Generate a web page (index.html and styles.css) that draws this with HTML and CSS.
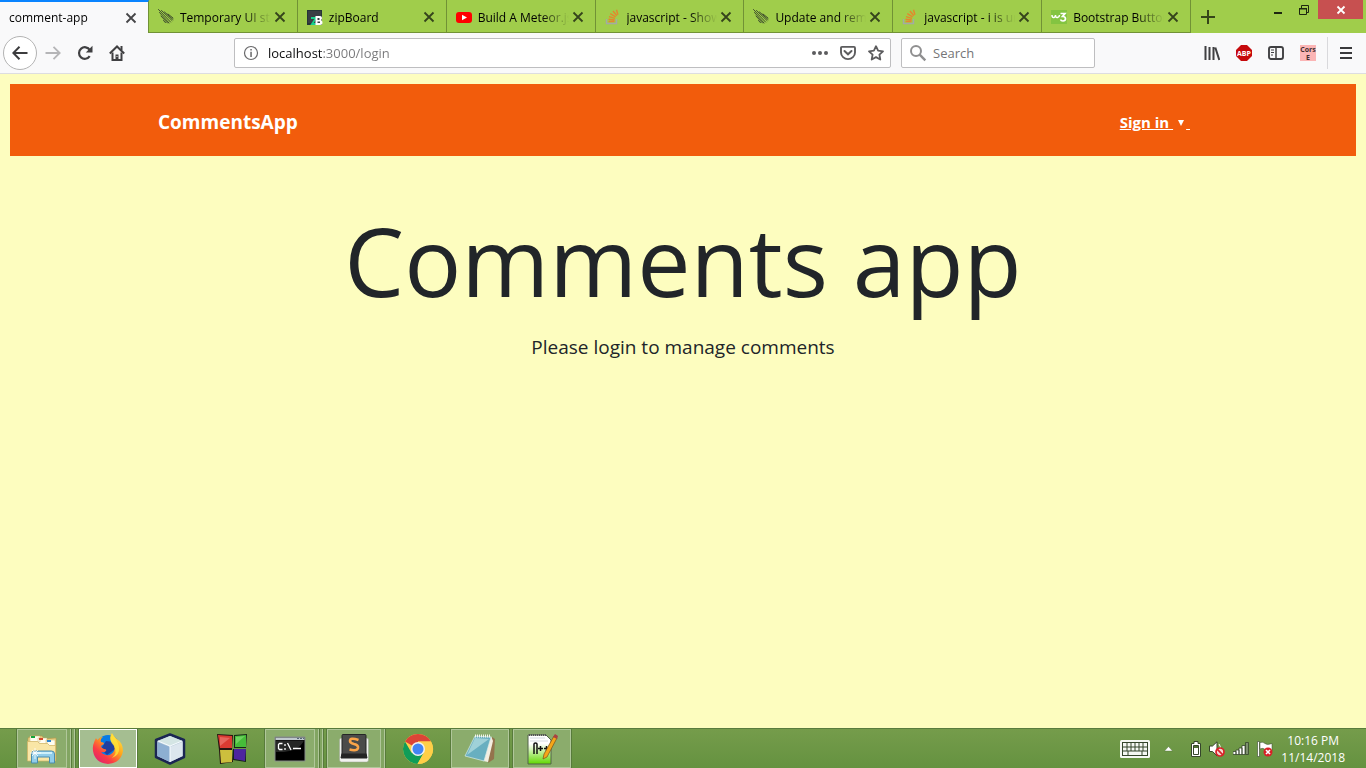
FILE: index.html
```html
<!DOCTYPE html>
<html lang="en">
<head>
<meta charset="utf-8">
<meta name="viewport" content="width=device-width, initial-scale=1">
<title>comment-app</title>
<link rel="stylesheet" href="styles.css">
</head>
<body>
<svg class="defs" aria-hidden="true">
  <symbol id="close" viewBox="0 0 12 12"><path d="M1.500 1.500l9 9M10.500 1.500l-9 9" stroke="currentColor" stroke-width="1.800" fill="none"/></symbol>
  <symbol id="meteor" viewBox="0 0 16 16"><path d="M.5.5l12 12.500M3.500 1.500l10.500 10M6.500 3l8.500 7.500M10 5l5 4M1.500 3.500l9.500 10.500M3 7l6.500 7M5.500 11.500l2 2.200" stroke="#34412a" stroke-width=".9" fill="none" stroke-linecap="round"/></symbol>
  <symbol id="stack" viewBox="0 0 16 16"><path d="M1.500 10v4.500h10V10" fill="none" stroke="#a4a9a4" stroke-width="1.400"/><path d="M3.500 12.500h6M3.500 10.300l6.200.7M4 7.600l6 1.800M5.300 4.700l5.300 3.200M8 2l3.800 4.800M11.500.8l1.400 5" stroke="#e5862c" stroke-width="1.400" fill="none"/></symbol>
</svg>

<header class="browser">
  <div class="tabstrip">
    <nav class="tabs" aria-label="Open tabs">
      <div class="tab tab-active"><span class="tab-title">comment-app</span><button class="tab-close" aria-label="Close tab"><svg><use href="#close"/></svg></button></div>
      <div class="tab"><svg class="favicon"><use href="#meteor"/></svg><span class="tab-title">Temporary UI state</span><button class="tab-close" aria-label="Close tab"><svg><use href="#close"/></svg></button></div>
      <div class="tab">
        <svg class="favicon" viewBox="0 0 16 16"><path d="M0 1h15v15H0z" fill="#263536"/><path d="M1 2h13v12H1z" fill="#3a3e44"/><path d="M4 9h5l-4 6h4" stroke="#17cf8b" stroke-width="1.800" fill="none"/><path d="M8.500 7h4.500q2 0 2 2 0 1.500-1 2 1.500.5 1.500 2.500 0 2.500-2.500 2.500H8.500zm2 2v2h2V9zm0 3.500V14h2.500v-1.500z" fill="#fff" fill-rule="evenodd"/></svg>
        <span class="tab-title">zipBoard</span><button class="tab-close" aria-label="Close tab"><svg><use href="#close"/></svg></button>
      </div>
      <div class="tab">
        <svg class="favicon" viewBox="0 0 16 16"><rect y="3" width="16" height="11" rx="3" fill="#f00"/><path d="M6 5.800v5.400L11 8.500z" fill="#fff"/></svg>
        <span class="tab-title">Build A Meteor.js App</span><button class="tab-close" aria-label="Close tab"><svg><use href="#close"/></svg></button>
      </div>
      <div class="tab"><svg class="favicon"><use href="#stack"/></svg><span class="tab-title">javascript - Show hide</span><button class="tab-close" aria-label="Close tab"><svg><use href="#close"/></svg></button></div>
      <div class="tab"><svg class="favicon"><use href="#meteor"/></svg><span class="tab-title">Update and remove</span><button class="tab-close" aria-label="Close tab"><svg><use href="#close"/></svg></button></div>
      <div class="tab"><svg class="favicon"><use href="#stack"/></svg><span class="tab-title">javascript - i is undefined</span><button class="tab-close" aria-label="Close tab"><svg><use href="#close"/></svg></button></div>
      <div class="tab">
        <svg class="favicon" viewBox="0 0 16 16"><path d="M0 1h16v14H0z" fill="#83c441"/><path d="M1 6q0 3 2 2.500Q4.500 8 4.500 6q0 3 2 2.500Q8.500 8 8.500 6" stroke="#fff" stroke-width="1.500" fill="none"/><path d="M9.500 4.500h4.500L11.500 7.500q3 0 3 2.300 0 2.200-2.500 2.200-2 0-2.500-1.500" stroke="#fff" stroke-width="1.700" fill="none"/></svg>
        <span class="tab-title">Bootstrap Buttons</span><button class="tab-close" aria-label="Close tab"><svg><use href="#close"/></svg></button>
      </div>
    </nav>
    <button class="new-tab" aria-label="New tab"><svg width="14" height="14" viewBox="0 0 14 14"><path d="M7 0v14M0 7h14" stroke="#354519" stroke-width="2"/></svg></button>
    <div class="window-controls">
      <button class="win-btn" aria-label="Minimize"><svg width="12" height="12" viewBox="0 0 12 12"><path d="M2 8h8v2H2z" fill="#1d2710"/></svg></button>
      <button class="win-btn" aria-label="Restore"><svg width="12" height="12" viewBox="0 0 12 12"><path d="M1.500 4.500h7v6h-7zM3.500 4V1.500h7v7H9" fill="none" stroke="#1d2710"/><path d="M1 4h8v1.500H1z" fill="#1d2710"/></svg></button>
      <button class="win-btn win-close" aria-label="Close"><svg width="10" height="10" viewBox="0 0 10 10"><path d="M1.500 1.500l7 7M8.500 1.500l-7 7" stroke="#fff" stroke-width="1.800"/></svg></button>
    </div>
  </div>

  <div class="toolbar">
    <div class="tools nav-tools">
      <button class="tool back" aria-label="Back"><svg width="16" height="16" viewBox="0 0 16 16"><path d="M15.500 8H1.500M7.500 1.800L1.300 8l6.200 6.200" fill="none" stroke="#3c3c3e" stroke-width="2"/></svg></button>
      <button class="tool" aria-label="Forward"><svg width="16" height="16" viewBox="0 0 16 16"><path d="M.5 8h14M8.500 1.800L14.700 8l-6.200 6.200" fill="none" stroke="#b5b5b7" stroke-width="1.800"/></svg></button>
      <button class="tool" aria-label="Reload"><svg width="16" height="16" viewBox="0 0 16 16"><path d="M12.700 11.200A5.800 5.800 0 1 1 12.800 5" fill="none" stroke="#404042" stroke-width="2.200"/><path d="M15.500.8v6.700H8.800z" fill="#404042"/></svg></button>
      <button class="tool" aria-label="Home"><svg width="16" height="16" viewBox="0 0 16 16"><path d="M.8 8.500L8 1.500l7.200 7" fill="none" stroke="#404042" stroke-width="2"/><path d="M11.500 1h2v4h-2z" fill="#404042"/><path d="M3.500 7.500V15h9V7.500" fill="none" stroke="#404042" stroke-width="2"/><path d="M6.500 9.500h3V15h-3z" fill="#404042"/><path d="M7.500 11h1v1h-1z" fill="#eee"/></svg></button>
    </div>

    <div class="field url-field">
      <svg width="16" height="16" viewBox="0 0 16 16"><circle cx="8" cy="8" r="6.500" fill="none" stroke="#68686a" stroke-width="1.200"/><path d="M7.300 4h1.500v1.600H7.300zM7.300 6.800h1.500V12H7.300z" fill="#68686a"/></svg>
      <label class="sr" for="url">Address</label>
      <input id="url" class="url-input" type="text" value="localhost:3000/login">
      <div class="url-actions">
        <button class="mini" aria-label="Page actions"><svg width="16" height="16" viewBox="0 0 16 16"><g fill="#5c5c5e"><circle cx="2" cy="8" r="2"/><circle cx="8" cy="8" r="2"/><circle cx="14" cy="8" r="2"/></g></svg></button>
        <button class="mini" aria-label="Save to Pocket"><svg width="16" height="16" viewBox="0 0 16 16"><path d="M2 1.900h12q1 0 1 1V7.500a7 6.600 0 0 1-14 0V2.900q0-1 1-1z" fill="none" stroke="#5c5c5e" stroke-width="1.900"/><path d="M4.500 6L8 9.300 11.500 6" fill="none" stroke="#5c5c5e" stroke-width="2" stroke-linecap="round"/></svg></button>
        <button class="mini" aria-label="Bookmark"><svg width="16" height="16" viewBox="0 0 16 16"><path d="M8 1.200l2.100 4.500 4.900.6-3.600 3.300.9 4.900L8 12.100l-4.300 2.400.9-4.900L1 6.300l4.900-.6z" fill="none" stroke="#5c5c5e" stroke-width="1.800" stroke-linejoin="round"/></svg></button>
      </div>
    </div>

    <div class="field search-field">
      <svg width="18" height="18" viewBox="0 0 18 18"><circle cx="7" cy="7" r="5" fill="none" stroke="#8f8f90" stroke-width="2"/><path d="M10.700 10.700l5.600 5.600" stroke="#8f8f90" stroke-width="2.400"/></svg>
      <label class="sr" for="search">Search the web</label>
      <input id="search" type="text" placeholder="Search">
    </div>

    <div class="tools ext-tools">
      <button class="tool" aria-label="Library"><svg width="16" height="16" viewBox="0 0 16 16"><path d="M1.500 1v14M5.500 2v13M9.500 2v13M11.300 2.500l4 12.500" stroke="#404042" stroke-width="2"/></svg></button>
      <button class="tool" aria-label="Adblock Plus"><svg width="16" height="16" viewBox="0 0 16 16"><path d="M5 0h6l5 5v6l-5 5H5l-5-5V5z" fill="#c60a0c"/><text x="8" y="11" text-anchor="middle" class="abp-text">ABP</text></svg></button>
      <button class="tool" aria-label="Sidebars"><svg width="16" height="16" viewBox="0 0 16 16"><rect x="1" y="2" width="14" height="12" rx="2" fill="none" stroke="#404042" stroke-width="1.900"/><path d="M8 2v12" stroke="#404042" stroke-width="1.500"/><path d="M3 5h3M3 7.500h3M3 10h2" stroke="#404042"/></svg></button>
      <button class="tool" aria-label="Cors Everywhere"><svg width="16" height="16" viewBox="0 0 16 16"><path d="M0 0h16v16H0z" fill="#fbb5b5"/><text x="8" y="7" text-anchor="middle" class="cors-text">Cors</text><text x="8" y="15" text-anchor="middle" class="cors-text">E</text></svg></button>
    </div>
    <button class="tool menu" aria-label="Menu"><svg width="12" height="12" viewBox="0 0 12 12"><path d="M0 1h12M0 6h12M0 11h12" stroke="#39393b" stroke-width="2"/></svg></button>
  </div>
</header>

<main class="page">
  <nav class="appbar">
    <a class="brand" href="#">CommentsApp</a>
    <a class="signin" href="#">Sign in <svg class="caret" width="8" height="6" viewBox="0 0 8 6"><path d="M1 0h6L4 6z" fill="#fff"/></svg>&nbsp;</a>
  </nav>
  <section class="hero">
    <h1>Comments app</h1>
    <p>Please login to manage comments</p>
  </section>
</main>

<footer class="taskbar">
  <div class="apps">
    <button class="app open stack2" aria-label="File Explorer"><span class="face">
      <svg width="32" height="32" viewBox="0 0 32 32"><path d="M2 5l4-2h10l2 3 12-1v22H2z" fill="#edd58b" stroke="#b99b4b" stroke-width=".7"/><path d="M4 3h10v6H4zM12 5h9v6h-9zM20 7h9v6h-9z" fill="#fffdf0" stroke="#c9b06a" stroke-width=".5"/><path d="M5 3h4v2H5z" fill="#14a43a"/><path d="M13 5h4v2h-4z" fill="#d54a2e"/><path d="M21 7h4v2h-4z" fill="#2c85d0"/><path d="M1.500 8.500h10l2 2h8l2 2h6V28h-28z" fill="#f9e6a6" stroke="#d1b564" stroke-width=".7"/><path d="M5.500 30V21q0-3 3-3h17q3 0 3 3v9h-5v-6h-12v6z" fill="#91cdea" stroke="#4b8cad"/><path d="M7 20h19" stroke="#e3fbff" stroke-width="1.500"/><path d="M9 15v11M4 20h11M6 17l6 6M12 17l-6 6" stroke="#fff" stroke-width=".8"/></svg></span></button>
    <button class="app active" aria-label="Firefox"><span class="face">
      <svg width="32" height="32" viewBox="0 0 32 32"><defs><linearGradient id="fx" x1=".9" y1="0" x2=".1" y2="1"><stop stop-color="#fff04a"/><stop offset=".4" stop-color="#ffa51c"/><stop offset=".7" stop-color="#fb3b45"/><stop offset="1" stop-color="#d91d78"/></linearGradient></defs><circle cx="16" cy="14" r="12" fill="#067be5"/><path d="M14 8q9 0 9 8l-8 6-6-6z" fill="#213f9f"/><path d="M4 5q-4 7-3 13 2 12 15 13 13-1 15-13 0-8-6-12-4-3-5-6-3 4-1 8 5 5 3 10-3 5-8 4-4-1-5-3 3 1 5-1 1-2-2-2-3-1-3-3l3-2q0-2-3-2-1-3 2-5-4 0-5 3Q4 6 4 5z" fill="url(#fx)"/><path d="M20 1q-4 6 2 12 4 7-2 12 8-3 7-11-1-6-7-13z" fill="#ffe437" opacity=".8"/></svg></span></button>
    <button class="app" aria-label="NetBeans"><span class="face">
      <svg width="32" height="32" viewBox="0 0 32 32"><path d="M16 1.500L30 7v17L16 30.500 2 24V7z" fill="#bfd0dc" stroke="#1b2553" stroke-width="2.500" stroke-linejoin="round"/><path d="M4 8l12-5 12 5-12 5z" fill="#d4e5e4"/><path d="M3.500 9L16 14v15L3.500 23z" fill="#8dafd2"/><path d="M28.500 9L16 14v15l12.500-6z" fill="#dce6ee"/><path d="M4 8l12 5 12-5M16 13v16" stroke="#f6fbff" fill="none"/></svg></span></button>
    <button class="app" aria-label="Code::Blocks"><span class="face">
      <svg width="32" height="32" viewBox="0 0 32 32"><path d="M1 1l16 1-1 14 1 13-13 2-1-14z" fill="#271512"/><path d="M18 2l13-1-1 14H18zM17 16h13v13l-13-2z" fill="#142616"/><path d="M2 2l14 1v12H4z" fill="#da3b32"/><path d="M4 4l10 1-10 8z" fill="#f19187" opacity=".5"/><path d="M19 3l11-1v12H19z" fill="#46bc39"/><path d="M20 4l9-1-9 8z" fill="#96e883" opacity=".5"/><path d="M4 17h12v12L5 30z" fill="#cdbf3d"/><path d="M18 16h12l-1 12-11-2z" fill="#4d259f"/></svg></span></button>
    <button class="app open stack2" aria-label="Command Prompt"><span class="face">
      <svg width="32" height="32" viewBox="0 0 32 32"><defs><linearGradient id="cmd" x2="1" y2="1"><stop stop-color="#444"/><stop offset=".5" stop-color="#000"/></linearGradient></defs><path d="M1 4h30v24H1z" fill="#000" stroke="#858b87"/><path d="M2 7.500h28Q24 20 2 19z" fill="#262726"/><path d="M1.500 4.500h29v2.500h-29z" fill="#bfc8cc"/><path d="M23 5.500h2M26 5.500h2M29 5.500h1" stroke="#567"/><path d="M8.500 10.500H5.500L4.500 11.500v4l1 1h3M11 11v2M11 15v2M13.500 10l3.500 7M19 15.500h8" stroke="#fff" stroke-width="1.300" fill="none"/></svg></span></button>
    <button class="app open stack1" aria-label="Sublime Text"><span class="face">
      <svg width="32" height="32" viewBox="0 0 32 32"><path d="M1.500 7q0-2 2-2h25q2 0 2 2v20q0 2-2 2h-25q-2 0-2-2z" fill="#f1f2ef" stroke="#99a28f" stroke-width=".5"/><path d="M5 1.500h22q1 0 1 1V20l1 5H3l1-5V2.500q0-1 1-1z" fill="#4b4b4a" stroke="#252525"/><path d="M4 20.500h24l1 4.500H3z" fill="#242424"/><path d="M20.500 7q-8.500-3-8.500 1 0 2 4 3 4.500 1 4 4-1 3.500-8.500 1.500" fill="none" stroke="#fba448" stroke-width="2.600"/></svg></span></button>
    <button class="app" aria-label="Chrome"><span class="face">
      <svg width="32" height="32" viewBox="0 0 32 32"><circle cx="16" cy="16" r="15" fill="#ffcf48"/><path d="M16 16L3 8.500A15 15 0 0 1 29 8.500H16z" fill="#db4437"/><path d="M3 8.500A15 15 0 0 0 15.500 31L22 19.500l-6-3.500-6.500 3.700z" fill="#109d58"/><path d="M29 8.500H16v8l6 3L15.500 31A15 15 0 0 0 29 8.500z" fill="#ffcf48"/><circle cx="16" cy="16" r="7" fill="#f1f1f1"/><circle cx="16" cy="16" r="5.500" fill="#4285f4"/></svg></span></button>
    <button class="app open" aria-label="Notepad"><span class="face">
      <svg width="32" height="32" viewBox="0 0 32 32"><path d="M28 4l3 2-1 20-6 4z" fill="#94744d"/><path d="M27 3l2 5-5 21-5-1z" fill="#f4eee1"/><path d="M11 3l16 1-7 24L1 23z" fill="#68afc0" stroke="#d9ede9" stroke-width=".7"/><path d="M11 5l14 1L3 22z" fill="#c5e7e8" opacity=".6"/><path d="M11 3h16" stroke="#f5f5ef" stroke-width="3" stroke-dasharray="1 1"/></svg></span></button>
    <button class="app open" aria-label="Notepad++"><span class="face">
      <svg width="32" height="32" viewBox="0 0 32 32"><defs><linearGradient id="npp" x2="0" y2="1"><stop offset=".3" stop-color="#fff"/><stop offset="1" stop-color="#61d900"/></linearGradient></defs><path d="M2 2h18l5 5v24H2z" fill="url(#npp)" stroke="#52634b"/><path d="M3 2h17" stroke="#555" stroke-width="2" stroke-dasharray="1 1"/><path d="M4 5h15M4 8h18" stroke="#b8c5cd" stroke-width=".6"/><path d="M8 21V11q0-1 1.500-1t1.500 1v10M12 15.500h5M14.500 13v5M18 15.500h5M20.500 13v5" fill="none" stroke="#111" stroke-width="1.500"/><path d="M28 3l3 2-10 19-4 2 1-5z" fill="#f5a619" stroke="#7a5019" stroke-width=".7"/><path d="M27 4l2-3 3 2-1 3z" fill="#a94242"/></svg></span></button>
  </div>
  <div class="tray">
    <button class="tray-btn" aria-label="Touch keyboard"><svg width="30" height="18" viewBox="0 0 30 18"><rect width="30" height="18" rx="1.500" fill="#f6f8f3"/><rect x="2.500" y="2.500" width="25" height="13" fill="none" stroke="#35452b"/><path d="M3 7h24M3 11h24M7 3v8M11 3v8M15 3v8M19 3v8M23 3v8M8 11v4M22 11v4" stroke="#35452b"/></svg></button>
    <button class="tray-btn tray-up" aria-label="Show hidden icons"><svg width="9" height="6" viewBox="0 0 9 6"><path d="M4.500.5L8.500 5h-8z" fill="#fff" stroke="#4c6938" stroke-width=".4"/></svg></button>
    <button class="tray-btn" aria-label="Battery"><svg width="10" height="16" viewBox="0 0 10 16"><path d="M3 .5h4v2h2.500v13h-9v-13H3z" fill="#fff" stroke="#35452b"/><path d="M2.500 4.500h5v9h-5z" fill="#fff" stroke="#35452b"/><path d="M3 5h4v2H3z" fill="#517136"/></svg></button>
    <button class="tray-btn" aria-label="Volume"><svg width="16" height="16" viewBox="0 0 16 16"><path d="M.5 5h3L8 .8v14L3.500 10.500h-3z" fill="#fff" stroke="#35452b"/><path d="M10 3q2 2 1 6" stroke="#fff" fill="none"/><circle cx="11" cy="11" r="4" fill="#f6d8d3" stroke="#d92027" stroke-width="1.700"/><path d="M8.200 8.200l5.600 5.600" stroke="#d92027" stroke-width="1.700"/></svg></button>
    <button class="tray-btn" aria-label="Network"><svg width="16" height="14" viewBox="0 0 16 14"><path d="M0 9.500h3v3H0zM3 8h3v4.500H3zM6 6h3v6.500H6zM9 3.500h3v9H9z" fill="#fff" stroke="#35452b" stroke-width=".8"/><path d="M12.500.5h3v12h-3z" fill="#7e9070" stroke="#35452b" stroke-width=".8"/></svg></button>
    <button class="tray-btn" aria-label="Action Center"><svg width="16" height="16" viewBox="0 0 16 16"><path d="M.5.5h2v15h-2z" fill="#fff" stroke="#35452b" stroke-width=".6"/><path d="M3 1.500q3-1 5 1t7 0v7q-5 1-7-1T3 8z" fill="#fff" stroke="#35452b" stroke-width=".5"/><circle cx="11" cy="11" r="4.500" fill="#d92027"/><path d="M9 9l4 4M13 9l-4 4" stroke="#fff" stroke-width="1.600"/></svg></button>
    <div class="clock"><time>10:16 PM</time><time>11/14/2018</time></div>
  </div>
</footer>
</body>
</html>
```
FILE: styles.css
```css
* { box-sizing: border-box; }

body {
  margin: 0;
  min-height: 100vh;
  display: flex;
  flex-direction: column;
  background: #fdfdbf;
  font-family: "Open Sans", "Noto Sans", sans-serif;
  color: #212529;
}

button {
  display: flex;
  align-items: center;
  justify-content: center;
  padding: 0;
  border: 0;
  background: none;
  font: inherit;
}

svg { display: block; flex: none; }

.defs { position: absolute; width: 0; height: 0; }

.sr {
  position: absolute;
  width: 1px;
  height: 1px;
  overflow: hidden;
  clip-path: inset(50%);
}

/* Tab strip */
.tabstrip {
  display: flex;
  height: 33px;
  background: #a0cd4b;
}

.tabs { display: flex; flex: 1; min-width: 0; }

.tab {
  display: flex;
  flex: 1 1 0;
  align-items: center;
  min-width: 0;
  padding: 2px 11px 0 9px;
  border-right: 1px solid #719235;
  border-bottom: 1px solid #719235;
  font-size: 12px;
  color: #000;
}

.tab-active {
  padding-top: 0;
  border-top: 2px solid #0a84ff;
  border-bottom: 0;
  background: #f9f9fa;
}

.favicon { width: 16px; height: 16px; margin-right: 6px; }

.tab-title {
  flex: 1;
  overflow: hidden;
  white-space: nowrap;
  margin-right: 3px;
  mask-image: linear-gradient(to right, #000 calc(100% - 28px), transparent);
}

.tab-close { width: 12px; color: #35441c; }
.tab-close svg { width: 12px; height: 12px; }
.tab-active .tab-close { color: #454547; }

.new-tab { width: 33px; }

.window-controls { display: flex; width: 142px; justify-content: flex-end; padding-right: 3px; }
.win-btn { width: 26px; height: 19px; }
.win-close { width: 45px; margin-left: 1px; background: #c75050; }

/* Navigation toolbar */
.toolbar {
  display: flex;
  align-items: center;
  height: 41px;
  padding: 0 2px 0 3px;
  border-bottom: 1px solid #dddde0;
  background: #f9f9fa;
}

.tools { display: flex; align-items: center; }
.nav-tools { width: 231px; }
.tool { width: 32px; height: 32px; }
.back {
  width: 34px;
  height: 34px;
  border: 1px solid #b3b3b3;
  border-radius: 50%;
  background: #fff;
}

.field {
  display: flex;
  align-items: center;
  height: 30px;
  border: 1px solid #bebec0;
  border-radius: 2px;
  background: #fff;
}

.field input {
  flex: 1;
  min-width: 0;
  padding: 0;
  border: 0;
  outline: 0;
  background: none;
  font: 13px "Open Sans", "Noto Sans", sans-serif;
}

.url-field { flex: 1; padding: 0 6px 0 8px; gap: 9px; }

.field .url-input {
  background: linear-gradient(to right, #0c0c0d 54px, #78787a 54px);
  background-clip: text;
  color: transparent;
}

.url-actions { display: flex; gap: 12px; }
.mini { width: 16px; height: 28px; }

.search-field { width: 194px; margin-left: 10px; padding: 0 8px 0 7px; gap: 6px; }
.search-field input::placeholder { color: #757577; opacity: 1; }

.ext-tools { margin-left: 101px; }
.abp-text { font: bold 7px "Open Sans", sans-serif; fill: #fff; }
.cors-text { font: bold 7px "Open Sans", sans-serif; fill: #432f31; }

.menu {
  width: 37px;
  margin-left: 3px;
  border-left: 1px solid #d9d9dc;
}

/* Page */
.page { flex: 1; padding: 10px; }

.appbar {
  display: flex;
  align-items: center;
  justify-content: space-between;
  height: 72px;
  padding: 3px 166px 0 148px;
  background: #f25c0c;
}

.appbar a { color: #fff; font-weight: 700; }
.brand { font-size: 19px; text-decoration: none; }
.signin { font-size: 15px; }
.caret { display: inline-block; margin: 0 1px 2px 4px; }

.hero { padding-top: 46px; text-align: center; }
.hero h1 { margin: 0; font-size: 95px; font-weight: 400; line-height: 116px; }
.hero p { margin: 14px 0 0; font-size: 19px; line-height: 30px; }

/* Taskbar */
.taskbar {
  display: flex;
  justify-content: space-between;
  height: 40px;
  padding: 0 21px 0 17px;
  border-top: 1px solid #597c3d;
  background: linear-gradient(#759c4b, #659240);
}

.apps { display: flex; gap: 4px; }
.app { width: 58px; height: 39px; }

.face {
  display: flex;
  flex: 1;
  align-items: center;
  justify-content: center;
  height: 100%;
  border: 1px solid transparent;
}

.open .face {
  border-color: #b0c79a;
  background: #8bac6c;
}

.active .face { border: 1px solid #fff; background: #a5be91; }

.open, .active { outline: 1px solid #587b3b; }
.stack1, .stack2 { border-right: 1px solid #b0c79a; }
.stack1 { padding-right: 3px; background: #82a562; }
.stack2 { padding-right: 7px; background: linear-gradient(to right, #82a562 53px, #b0c79a 53px, #b0c79a 54px, #587b3b 54px, #587b3b 55px, #82a562 55px); }

.tray { display: flex; align-items: center; }
.tray-btn { height: 32px; margin-right: 8px; }
.tray-up { width: 24px; margin-left: -2px; margin-right: 11px; }

.clock {
  display: flex;
  flex-direction: column;
  align-items: center;
  font-size: 12px;
  line-height: 17px;
  color: #fff;
}
```
